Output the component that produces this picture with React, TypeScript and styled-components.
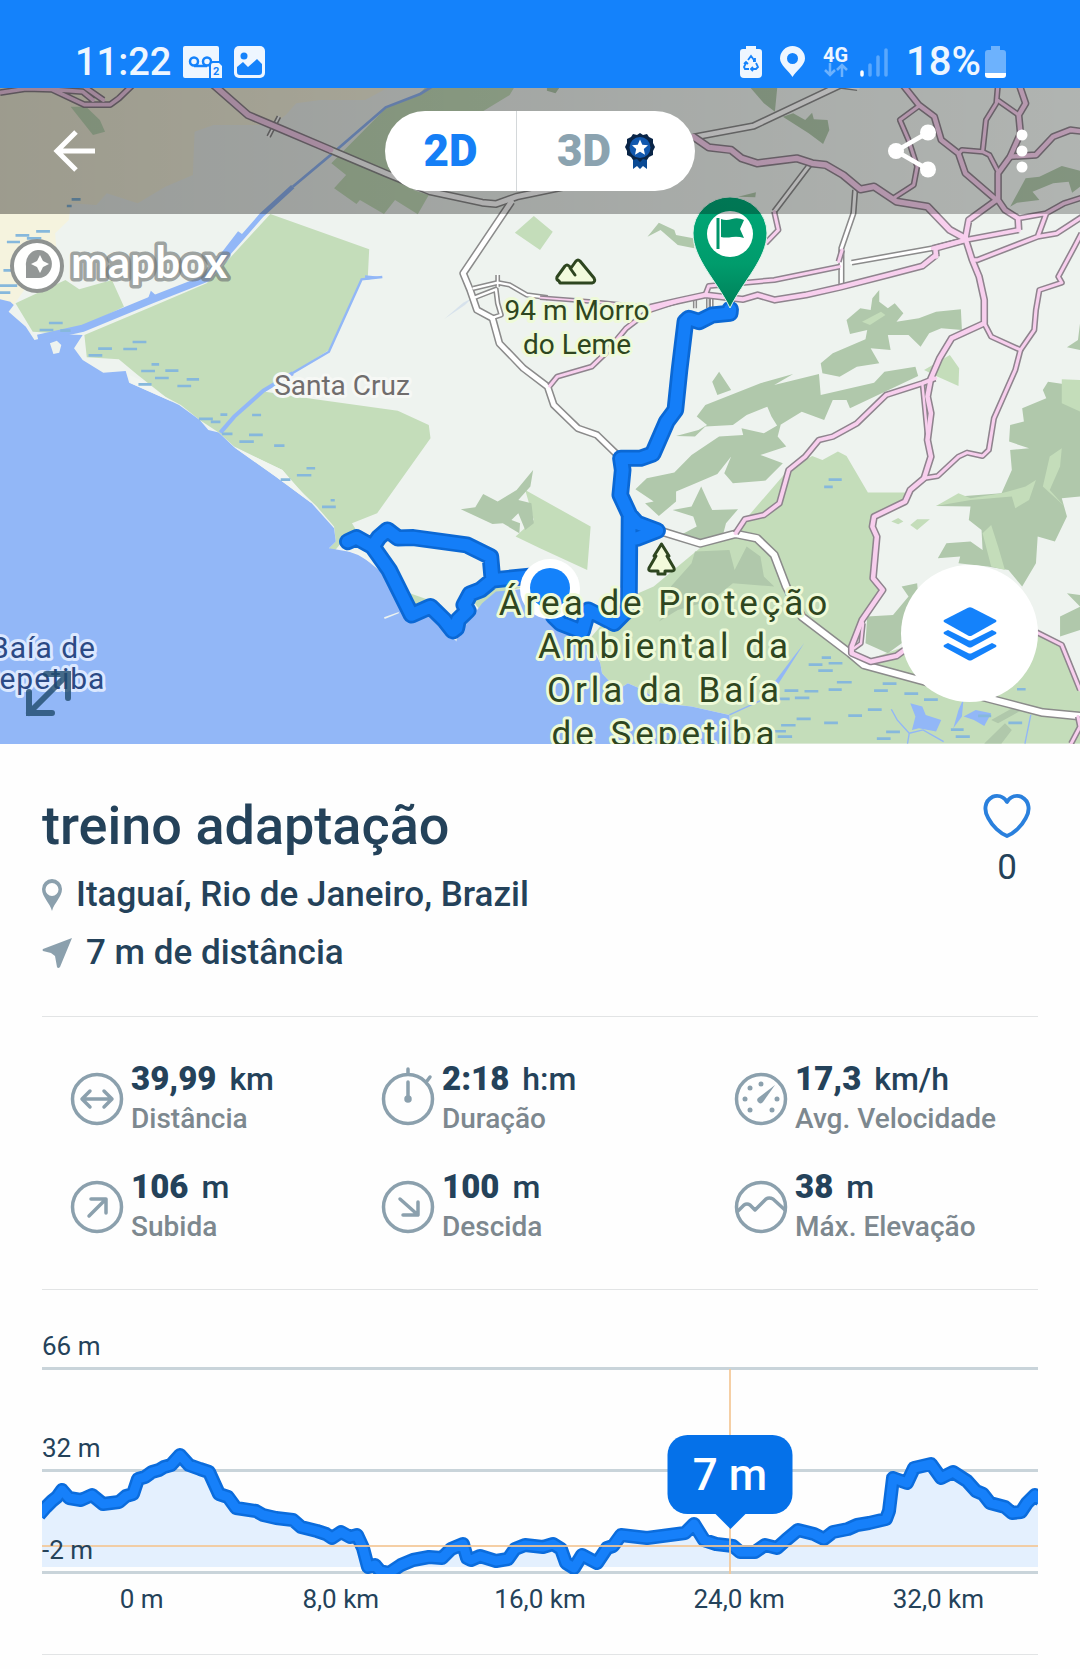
import React, { useState } from "react";
import styled, { createGlobalStyle } from "styled-components";

const ink = "#24425a";
const muted = "#7d888f";
const steel = "#8ba0ad";
const blue = "#1482fb";
const rule = "#e2e4e5";

const GlobalStyle = createGlobalStyle`
  * { box-sizing: border-box; }
  body {
    margin: 0;
    background: #fefefe;
    color: ${ink};
    font-family: Roboto, "Noto Sans", sans-serif;
  }
  button {
    border: 0;
    padding: 0;
    background: none;
    color: inherit;
    font: inherit;
    cursor: pointer;
  }
  svg { display: block; overflow: visible; }
  h1, p, dl, dd, dt { margin: 0; font-weight: inherit; }
`;

/* ---------- Status bar ---------- */

const StatusBar = styled.header`
  display: flex;
  align-items: flex-end;
  justify-content: space-between;
  height: 88px;
  padding: 0 74px 10px 75px;
  background: ${blue};
  color: #eef6ff;
`;

const StatusGroup = styled.div<{ $gap: number }>`
  display: flex;
  align-items: center;
  gap: ${(p) => p.$gap}px;
  height: 32px;
`;

const StatusText = styled.span<{ $size: number }>`
  font-size: ${(p) => p.$size}px;
  font-weight: 500;
  line-height: 32px;
`;

const BatteryGroup = styled.div`
  display: flex;
  align-items: center;
  gap: 4px;
`;

const Network = styled.div`
  display: flex;
  flex-direction: column;
  align-items: center;
  font-size: 20px;
  font-weight: 700;
  line-height: 16px;
`;

const NetworkGroup = styled.div`
  display: flex;
  align-items: center;
  gap: 12px;
`;

/* ---------- Map ---------- */

const MapArea = styled.section`
  position: relative;
  height: 656px;
  overflow: hidden;
  background: #eef3ef;
`;

const MapCanvas = styled.svg`
  width: 100%;
  height: 100%;
  overflow: hidden;
`;

const MapToolbar = styled.nav`
  position: absolute;
  inset: 0 0 auto 0;
  display: grid;
  grid-template-columns: 1fr auto 1fr;
  align-items: center;
  height: 126px;
  padding: 0 42px;
  background: linear-gradient(to right, rgba(0, 0, 0, 0.36), rgba(0, 0, 0, 0.26));
`;

const ToolbarActions = styled.div`
  display: flex;
  justify-content: flex-end;
  gap: 62px;
`;

const IconButton = styled.button`
  display: flex;
  align-items: center;
  justify-content: center;
  width: 64px;
  height: 64px;
  justify-self: start;
`;

const DotsButton = styled(IconButton)`
  width: 32px;
`;

const ViewSwitch = styled.div`
  display: flex;
  height: 80px;
  border-radius: 40px;
  overflow: hidden;
  background: #fff;
`;

const ViewOption = styled.button<{ $active: boolean; $wide?: boolean }>`
  display: flex;
  align-items: center;
  justify-content: center;
  gap: 14px;
  width: ${(p) => (p.$wide ? 179 : 131)}px;
  font-size: 44px;
  font-weight: 900;
  color: ${(p) => (p.$active ? "#157ff6" : "#8ba3b0")};

  & + & {
    border-left: 1px solid #d4d8da;
  }
`;

const ExpandButton = styled.button`
  position: absolute;
  left: 26px;
  bottom: 28px;
`;

const LayersButton = styled.button`
  position: absolute;
  right: 42px;
  bottom: 42px;
  display: flex;
  align-items: center;
  justify-content: center;
  width: 137px;
  height: 137px;
  border-radius: 50%;
  background: #fff;
`;

/* ---------- Details ---------- */

const Details = styled.main`
  padding: 0 42px;
`;

const Summary = styled.section`
  display: flex;
  justify-content: space-between;
  padding: 50px 0 42px;
  border-bottom: 1px solid ${rule};
`;

const Heading = styled.div`
  display: flex;
  flex-direction: column;
  gap: 16px;
`;

const Title = styled.h1`
  font-size: 54px;
  font-weight: 500;
  line-height: 64px;
`;

const Fact = styled.p`
  display: flex;
  align-items: center;
  gap: 14px;
  font-size: 35px;
  font-weight: 500;
  line-height: 42px;
`;

const LikeButton = styled.button`
  display: flex;
  flex-direction: column;
  align-items: center;
  align-self: flex-start;
  gap: 10px;
  width: 62px;
  font-size: 35px;
  line-height: 40px;
`;

const Stats = styled.dl`
  display: grid;
  grid-template-columns: 311fr 353fr 303fr;
  row-gap: 28px;
  padding: 42px 0 42px 29px;
  border-bottom: 1px solid ${rule};
`;

const Stat = styled.div`
  display: flex;
  align-items: center;
  gap: 8px;
  line-height: 40px;
  white-space: nowrap;
`;

const StatText = styled.div`
  display: flex;
  flex-direction: column-reverse;
`;

const StatLabel = styled.dt`
  font-size: 28px;
  font-weight: 500;
  color: ${muted};
`;

const StatValue = styled.dd`
  font-size: 32px;
  font-weight: 500;
`;

const StatNumber = styled.strong`
  margin-right: 13px;
  font-size: 33px;
  font-weight: 900;
`;

/* ---------- Elevation chart ---------- */

const ChartSection = styled.section`
  padding: 41px 0 40px;
  border-bottom: 1px solid ${rule};
  font-size: 26px;
  line-height: 30px;
`;

const Plot = styled.div`
  position: relative;
`;

const GridRow = styled.div<{ $first?: boolean }>`
  display: flex;
  align-items: flex-end;
  height: ${(p) => (p.$first ? "auto" : "102px")};
  padding-bottom: 6px;
  border-bottom: 3px solid #c9d4da;
`;

const GridLabel = styled.span`
  position: relative;
  z-index: 1;
`;

const Curve = styled.svg`
  position: absolute;
  left: 0;
  bottom: 0;
  width: 100%;
  height: 205px;
`;

const Axis = styled.div`
  display: grid;
  grid-template-columns: repeat(5, 1fr);
  padding-top: 10px;
  text-align: center;
`;

const Tooltip = styled.output`
  position: absolute;
  z-index: 2;
  top: 104px;
  transform: translateX(-50%);
  width: 125px;
  padding-top: 2px;
  border-radius: 20px;
  background: #0571e9;
  color: #fff;
  font-size: 44px;
  font-weight: 500;
  line-height: 77px;
  text-align: center;

  &::after {
    content: "";
    position: absolute;
    top: 100%;
    left: 50%;
    margin: -1px 0 0 -16px;
    border: 16px solid transparent;
    border-bottom: 0;
    border-top-color: #0571e9;
  }
`;

/* ---------- Map drawing ---------- */

const tile = (col: number, row: number) => `translate(${col * 1568} ${row * 1110})`;

type TileShapes = { col: number; row: number; d: string[] };

const sand: TileShapes[] = [
  { col: 0, row: 0, d: ["M0 250H1150L1060 300 930 300 860 310 830 345 790 375 620 375 565 395 560 525 480 560 400 610 310 580 280 615 205 610 200 660 160 700 165 760 90 840 30 930 0 930Z"] },
];

const parks: TileShapes[] = [
  {
    col: 0, row: 0, d: [
      "M205 320H250L290 360 305 395 270 405Z",
      "M785 642 1072 748 1068 830 1050 840 955 1050 850 1120 770 1175 910 1197 1155 1232 1245 1275 1250 1315 1095 1540 1022 1570 1040 1600 990 1630 970 1655 955 1645 975 1625 970 1580 920 1520 860 1460 820 1410 680 1340 635 1298 580 1260 525 1215 480 1190 400 1125 345 1078 252 1072 245 1005 440 920 600 850Z",
      "M45 910 190 840 230 868 325 840 360 920 240 980 170 1000 95 995Z",
      "M1245 250H1500L1480 285 1400 335 1250 450 1200 570 1245 585 1213 643 1147 600 1115 642 1045 600 1035 612 970 565 1005 525 962 490 1120 325 1220 280Z",
      "M1495 698 1550 648 1605 695 1568 750Z",
    ],
  },
  {
    col: 0, row: 1, d: [
      "M1525 360 1715 470 1705 600 1568 535 1497 500 1550 450Z",
      "M1190 670 1250 692 1310 750 1200 720Z",
      "M1370 690 1440 650 1530 650 1440 670 1390 715Z",
    ],
  },
  {
    col: 1, row: 1, d: [
      "M175 880 150 800 240 690 330 650 470 530 560 500 570 480 720 300 790 258 820 270 865 245 890 258 952 368H1075L1060 390 965 440 975 500 970 620 1000 660 940 740 905 850 950 870 1060 830 1450 790 1520 830 1568 960V1121H555L550 1035 440 1010 350 1000 300 960 255 940 225 960 180 910Z",
      "M1115 0 1190-45 1217-5 1215 48 1155 20Z",
    ],
  },
];

const forests: TileShapes[] = [
  {
    col: 1, row: 0, d: [
      "M20 250H65L45 280 20 272Z",
      "M600 250H690L682 335 650 310Z",
      "M705 350 735 340 770 360 790 338 795 358 835 360 840 390 822 432 780 400Z",
      "M575 590 627 577 625 592Z",
      "M312 710 345 668 390 690 395 705 445 715 448 745 400 735 350 690Z",
      "M1365 620 1410 535 1450 530 1515 498 1568 512V560L1545 578 1535 545 1490 550 1430 575 1450 600 1385 608Z",
      "M890 960 930 925 960 930 965 895 985 870 985 905 1010 925 1030 910 1055 940 1035 965 1100 955 1150 935 1222 928 1225 990 1165 985 1130 1000 1105 1040 1070 1005 1010 1005 1018 1050 960 1045 985 1090 920 1100 870 1130 820 1120 815 1090 850 1060 945 1018 950 990 900 1002Z",
      "M1568 970 1562 1020 1530 1042 1568 1050Z",
    ],
  },
  {
    col: 0, row: 1, d: [
      "M1338 418 1380 412 1403 372 1445 395 1500 360 1548 300 1540 350 1505 390 1543 400 1550 460 1525 480 1505 430 1485 450 1510 460 1508 490 1460 460 1430 462Z",
    ],
  },
  {
    col: 1, row: 1, d: [
      "M395 198 460 180 485 165 455 140 480 105 640 40 735 12 680 45 810 12 815 75 970 38 1000 5 1090-10 1098 18 900 115 890 90 850 90 825 150 760 125 690 170 672 140 660 110 600 135 560 165 480 170 450 200Z",
      "M500 35 520 5 555 60 515 75Z",
      "M277 358 310 325 390 308 440 255 520 200 590 195 585 175 650 190 700 160 690 200 715 230 640 255 705 280 655 332 560 340 535 310 555 260 515 312 440 345 395 365V395L345 438 305 400 330 395Z",
      "M385 420 440 410 468 350 490 400 500 420 575 418 540 460 530 500 460 530 400 500 455 470 445 440Z",
      "M345 755 400 690 380 650 440 580 450 545 550 540 565 600 600 530 640 560 650 620 680 650 560 640 500 690 400 720Z",
      "M1460 60 1475 35 1568 50V380L1515 385 1530 440 1495 515 1445 500 1440 580 1400 650 1360 600 1300 590 1215 580 1220 560 1155 565 1180 520 1250 515 1285 540 1282 480 1245 450 1250 410 1150 408 1215 380 1340 370 1370 300 1365 240 1420 235 1362 215 1365 165 1405 155 1400 115 1470 85Z",
      "M1050 650 1095 640 1100 700 1130 760 1010 850 945 820 950 740 1025 735 1070 680Z",
      "M1530 670 1568 675V780L1510 800 1510 740 1568 710Z",
      "M1310 1050 1380 1010 1400 1020 1330 1060ZM1290 1121 1350 1060 1370 1080 1340 1121Z",
    ],
  },
];

const clearings: TileShapes[] = [
  { col: 1, row: 0, d: ["M935 965 990 935 1003 945 958 975Z"] },
  {
    col: 1, row: 1, d: [
      "M1150 408 1215 370 1250 385 1340 370 1410 350 1440 330 1420 390 1380 415 1370 380 1250 390Z",
      "M1460 350 1480 260 1515 235 1510 290 1480 360 1522 408Z",
      "M1515 28 1568 30V125L1515 100Z",
      "M1020 455 1040 444 1055 455 1040 463ZM1075 465 1095 448 1132 448 1095 480Z",
      "M1285 490 1310 465 1330 530 1350 600 1310 590Z",
      "M820 290 865 250 885 310 820 305Z",
    ],
  },
];

const water: TileShapes[] = [
  {
    col: 0, row: 0, d: [
      "M0 898 30 905 40 915 25 935 75 980 100 1020 170 1003 240 1005 215 1045 240 1080 300 1118 365 1113 375 1148 500 1205 520 1215 580 1260 605 1290 635 1298 680 1342 800 1430 905 1510 970 1585 975 1625 955 1645 1040 1660 1100 1710 1195 1800 1320 1920 1400 1810 1440 1775 1540 1765 1608 1850 1698 1900 1743 1990 1748 2020 1793 2070 1823 2050 1868 2070 1918 2110 2008 2120 2118 2145 2123 2240H0Z",
    ],
  },
  {
    col: 1, row: 1, d: [
      "M767 820 690 945 678 940 740 855Z",
      "M1075 1000 1110 1010 1120 1035 1165 1050 1150 1085 1100 1075 1080 1080 1090 1040Z",
      "M1230 1040 1265 1020 1310 1030 1290 1068 1260 1050Z",
      "M1230 985 1225 1040 1200 1075 1215 1020Z",
    ],
  },
];

const streams: { d: string; w: number }[] = [
  { d: "M1270 250 1220 282 1120 322 960 465 850 560", w: 8 },
  { d: "M850 560 760 645 650 775", w: 14 },
  { d: "M700 700 600 835 440 900 240 985 110 1015", w: 22 },
  { d: "M1110 831 1050 838 955 1055 845 1122", w: 7 },
  { d: "M850 1120 765 1172 680 1250 640 1298", w: 12 },
  { d: "M2118 2145 2258 2078", w: 4 },
  { d: "M2993 2145 2976 2231", w: 4 },
  { d: "M2588 2128 2605 2160 2640 2200 2635 2231M2640 2200 2680 2190 2740 2225", w: 4 },
];

/* Marsh marks: x, y of the left end and length. */
const marsh: [number, number, number][] = [
  [105, 694, 40], [45, 706, 40], [78, 715, 42], [20, 726, 38], [10, 811, 30], [0, 857, 50], [0, 878, 30],
  [142, 969, 40], [115, 990, 40], [175, 992, 30], [385, 1026, 40], [285, 1046, 40], [358, 1047, 40],
  [257, 1066, 40], [410, 1113, 40], [440, 1093, 22], [480, 1112, 38], [208, 598, 26], [194, 618, 14],
  [450, 1134, 40], [542, 1138, 36], [402, 1153, 38], [515, 1158, 40], [578, 1257, 40], [612, 1266, 28],
  [640, 1244, 20], [732, 1245, 26], [645, 1302, 30], [723, 1305, 40], [695, 1325, 42], [796, 1337, 30],
  [890, 1405, 25], [862, 1426, 42], [815, 1439, 28], [935, 1521, 40], [960, 1501, 12],
  [2406, 1439, 38], [2393, 1461, 25], [2386, 1973, 27], [2406, 1990, 40], [2348, 1994, 40], [2376, 2012, 42],
  [2430, 2047, 43], [2278, 2072, 40], [2336, 2074, 40], [2406, 2069, 38], [2563, 2051, 40], [2626, 2081, 40],
  [2538, 2072, 40], [2683, 2099, 40], [2308, 2094, 42], [2253, 2097, 40], [2520, 2129, 40], [2463, 2147, 40],
  [2313, 2157, 41], [2393, 2169, 40], [2268, 2176, 42], [2242, 2194, 40], [2258, 2210, 42], [2573, 2196, 40],
  [2546, 2216, 40], [2928, 2169, 40], [2761, 2189, 37], [2775, 2210, 41], [2953, 2068, 25], [2840, 2148, 38],
];

const whiteRoads: { d: string; w: number }[] = [
  { d: "M960 450 1120 520 1250 575 1400 608 1440 612 1500 590 1640 560", w: 24 },
  { d: "M1485 605 1345 820 1365 870 1385 930 1430 955 1450 1030 1520 1105 1590 1160 1608 1215 1678 1285 1733 1305 1788 1360", w: 23 },
  { d: "M1375 865 1445 848 1480 855 1530 885 1590 893M1380 892 1440 868 1445 910 1455 945 1425 955", w: 16 },
  { d: "M1445 860V825M780 410 810 350", w: 14 },
  { d: "M2013 412 2188 378 2440 255 2490 262", w: 23 },
  { d: "M2353 492 2248 635M2483 570 2478 640 2443 745V865", w: 18 },
  { d: "M2473 788 2708 745", w: 18 },
  { d: "M2018 925V890M2056 925V895M2066 925V895", w: 12 },
  { d: "M1923 1595 2033 1630 2136 1602 2198 1615 2248 1665 2283 1760 2328 1850 2468 1960 2508 1995 2668 2040 2868 2095 3028 2138 3150 2150", w: 27 },
];

const pinkRoads: { d: string; w: number }[] = [
  { d: "M0 278 75 266 150 268 245 314H320L345 295 390 250M150 268 240 275 270 300M250 264 300 300", w: 20 },
  { d: "M615 250 720 345 800 380 960 450", w: 25 },
  { d: "M2013 410 2058 442 2123 450 2153 475 2198 490 2313 475 2358 490 2398 495 2448 525 2498 568 2538 560 2603 605 2693 620 2758 690 2803 715", w: 25 },
  { d: "M2248 635 2260 690 2223 730M2445 750 2435 785", w: 18 },
  { d: "M2618 250 2668 315 2713 350 2733 420 2783 460 2803 520 2893 600", w: 22 },
  { d: "M2668 318 2613 360 2638 420 2663 500 2653 555 2598 592", w: 18 },
  { d: "M2898 250 2893 310 2863 360 2853 455 2793 450 2783 462M2853 455 2873 465 2898 515M2896 300 2958 345", w: 18 },
  { d: "M2958 250 2978 310 2958 345 2963 400 2933 470 2898 520V600L2918 630 2956 655 2958 690", w: 22 },
  { d: "M2933 470 3008 465 3058 410 3108 390 3150 395", w: 22 },
  { d: "M2893 600 2813 660 2803 715 2823 780 2843 830 2858 900V970L2763 1015 2728 1075 2703 1135 2693 1190 2703 1240 2693 1320 2703 1370 2683 1435 2643 1470 2628 1505 2538 1550 2533 1580 2546 1610 2535 1735 2563 1770 2503 1860 2473 1940V1960L2528 1985 2603 1968 2640 1940", w: 22 },
  { d: "M2506 1870 2500 1930 2480 1945M2678 1150 2693 1310", w: 16 },
  { d: "M2715 1135 2678 1150 2573 1185 2488 1270 2418 1310 2378 1320 2338 1370 2290 1410 2263 1510 2218 1545 2163 1558 2136 1600", w: 20 },
  { d: "M2858 970 2878 1010 2963 1050 2948 1110 2886 1255 2871 1350 2853 1368 2808 1358 2783 1370 2723 1428 2683 1435", w: 18 },
  { d: "M2963 1050 3003 990 3008 930 3018 870 3083 848 3073 830 3120 740 3140 700", w: 18 },
  { d: "M1568 893 1720 905 1888 922", w: 14 },
  { d: "M1888 922 1968 903 2048 885 2158 898 2200 885 2250 900 2340 885 2438 862 2578 825 2678 798 2718 765M2718 770 2716 745 2803 720", w: 22 },
  { d: "M2048 885 2058 858 2248 840 2438 800", w: 18 },
  { d: "M2708 745 2803 720 2958 690", w: 20 },
  { d: "M2956 655 3038 640 3090 610 3150 590M3038 640 3013 710 2838 780 2823 780M3013 710 3068 700 3150 645", w: 19 },
  { d: "M1968 903 1888 930 1818 985 1758 1060 1718 1100 1618 1130 1596 1158", w: 18 },
  { d: "M3010 1897 3083 1935 3136 2070M3130 2150 3136 2180 3110 2231", w: 18 },
];

const trail =
  "M2120 928 2119 940 2068 945 2030 965 2000 955 1990 965 1973 1110 1961 1230 1936 1265 1895 1362 1860 1375 1803 1375 1808 1410 1801 1485 1828 1545 1826 1825 1783 1870 1708 1830 1690 1895 1628 1870 1608 1850M1828 1545 1850 1570 1908 1592 1850 1615 1828 1620" +
  "M1600 1725 1545 1728 1430 1740 1424 1670 1355 1635 1200 1613 1155 1614 1125 1590 1100 1612 1082 1640 1035 1613 1010 1625M1082 1640 1130 1710 1195 1845 1250 1820 1290 1860 1315 1893 1325 1885 1330 1860 1358 1832 1348 1815 1365 1782 1395 1770 1430 1740";

const Shapes = ({ list, fill }: { list: TileShapes[]; fill: string }) => (
  <>
    {list.map((t, i) => (
      <g key={i} transform={tile(t.col, t.row)}>
        <path d={t.d.join("")} fill={fill} />
      </g>
    ))}
  </>
);

const Roads = ({ list, edge, fill }: { list: { d: string; w: number }[]; edge: string; fill: string }) => (
  <g fill="none" strokeLinejoin="round">
    {list.map((r, i) => <path key={i} d={r.d} stroke={edge} strokeWidth={r.w} />)}
    {list.map((r, i) => <path key={i} d={r.d} stroke={fill} strokeWidth={r.w - 9} strokeLinecap="round" />)}
  </g>
);

const MapLabel = styled.text<{ $size: number; $color: string; $halo: string; $tracking?: number }>`
  font-size: ${(p) => p.$size}px;
  fill: ${(p) => p.$color};
  stroke: ${(p) => p.$halo};
  stroke-width: 6px;
  stroke-linejoin: round;
  paint-order: stroke;
  letter-spacing: ${(p) => p.$tracking ?? 0}px;
  text-anchor: middle;
`;

const Wordmark = styled.text`
  font-family: Lato, Roboto, sans-serif;
  font-size: 44px;
  font-weight: 700;
  fill: #fff;
  stroke: rgba(110, 115, 115, 0.65);
  stroke-width: 7px;
  stroke-linejoin: round;
  paint-order: stroke;
`;

const green = { $color: "#2e4620", $halo: "#eefad8" };

const TrailMap = () => (
  <MapCanvas viewBox="0 88 1080 656" preserveAspectRatio="xMidYMid slice" role="img" aria-label="Mapa da trilha">
    <defs>
      <linearGradient id="pin" x1="0" y1="0" x2="0" y2="1">
        <stop offset="0" stopColor="#00a877" />
        <stop offset="0.6" stopColor="#009c6c" />
        <stop offset="1" stopColor="#00805a" />
      </linearGradient>
    </defs>
    <g transform="scale(0.3444 0.3333)">
      <rect width="3136" height="2240" fill="#eef3ef" />
      <Shapes list={sand} fill="#f5f3de" />
      <Shapes list={parks} fill="#c4ddba" />
      <Shapes list={forests} fill="#b0c8ab" />
      <Shapes list={clearings} fill="#c4ddba" />
      <Shapes list={water} fill="#92b7f7" />
      <path d="M145 1030 165 1022 178 1035 172 1058 155 1062ZM1115 1852 1158 1836 1158 1840 1117 1857ZM1318 1915H1327L1325 1925Z" fill="#eef3ef" />
      <path d="M680 1342 820 1410 905 1510 800 1430ZM375 1125 410 1140 500 1205 380 1150ZM1000 1650 1050 1660 1080 1690 1040 1665Z" fill="#f1f5f1" />
      <g fill="none" stroke="#92b7f7">
        {streams.map((s, i) => <path key={i} d={s.d} strokeWidth={s.w} />)}
      </g>
      <path d="M430 895 438 872 455 888ZM1060 826 1112 831 1060 840Z" fill="#92b7f7" />
      <path d="M1290 957 1345 908 1370 895 1350 915Z" fill="#d7e2ec" />
      <path d={marsh.map(([x, y, l]) => `M${x} ${y}h${l}`).join("")} stroke="#86b8dc" strokeWidth="8" />
      <Roads list={whiteRoads} edge="#8b8b8b" fill="#fff" />
      <Roads list={pinkRoads} edge="#8f848e" fill="#f8cfee" />
      <g fill="none" strokeLinecap="round" strokeLinejoin="round">
        <path d={trail} stroke="#0b68d4" strokeWidth="51" />
        <path d={trail} stroke="#147ef8" strokeWidth="35" />
      </g>
    </g>

    <circle cx="550" cy="589" r="30" fill="#fff" />
    <circle cx="550" cy="588" r="20" fill={blue} />

    <path d="M730 308C717 281 693 259 693 233a37 36 0 0 1 74 0C767 259 743 281 730 308Z" fill="url(#pin)" stroke="#dff3ea" strokeWidth="1" strokeLinejoin="round" />
    <circle cx="730" cy="234" r="23" fill="#fff" />
    <path d="M716.500 218h3v31h-3ZM721 219q5 2 11 0t12 1l-4 9 4 9q-6-2-12-1t-11 0Z" fill="#00966a" />

    <path d="M559 281q-3-1-2-4l8-11q2-2 4 0l2 2 5-7q2-2 4 0l14 17q2 4-2 5h-32ZM570 268l5 7" fill="#f2fbdc" stroke="#2e4620" strokeWidth="3" strokeLinejoin="round" strokeLinecap="round" />
    <path d="M661.500 544 669 556h-2l7 12q1 3-2 3h-7v3h-7v-3h-7q-3 0-2-3l7-12h-2Z" fill="#f2fbdc" stroke="#2e4620" strokeWidth="3" strokeLinejoin="round" />

    <MapLabel x="577" y="320" $size={28} {...green}>94 m Morro</MapLabel>
    <MapLabel x="577" y="354" $size={28} {...green}>do Leme</MapLabel>
    <MapLabel x="342" y="395" $size={28} $color="#706d6d" $halo="#f6f8f5">Santa Cruz</MapLabel>
    <MapLabel x="43" y="658" $size={30} $color="#2b4a85" $halo="#dbe8ff" $tracking={1}>Baía de</MapLabel>
    <MapLabel x="43" y="689" $size={30} $color="#2b4a85" $halo="#dbe8ff" $tracking={1}>Sepetiba</MapLabel>
    <MapLabel x="665" y="615" $size={35} $tracking={4} {...green}>Área de Proteção</MapLabel>
    <MapLabel x="665" y="658" $size={35} $tracking={4} {...green}>Ambiental da</MapLabel>
    <MapLabel x="665" y="702" $size={35} $tracking={4} {...green}>Orla da Baía</MapLabel>
    <MapLabel x="665" y="746" $size={35} $tracking={4} {...green}>de Sepetiba</MapLabel>

    <circle cx="37" cy="266" r="25" fill="#fff" fillOpacity="0.95" stroke="#8f9391" strokeWidth="4" />
    <path d="M26 278V266a13 14 0 1 1 13 12ZM40 255l-3 6-6 3 6 3 3 6 3-6 6-3-6-3Z" fill="#939796" fillRule="evenodd" />
    <Wordmark x="71" y="278">mapbox</Wordmark>
  </MapCanvas>
);

/* ---------- Stat icons ---------- */

const statIcons: Record<string, React.ReactNode> = {
  distance: <path d="M12 26h28M19 18l-8 8 8 8M33 18l8 8-8 8" />,
  time: (
    <>
      <path d="M26 9v17M26-4v4M45 8l3-4" />
      <circle cx="26" cy="26" r="2" fill={steel} />
    </>
  ),
  speed: (
    <>
      <path d="M40 12 28 29a3 3 0 0 1-5-4Z" fill={steel} stroke="none" />
      <g fill={steel} stroke="none">
        <circle cx="26" cy="11" r="2.500" /><circle cx="15" cy="15" r="2.500" /><circle cx="10" cy="26" r="2.500" />
        <circle cx="15" cy="37" r="2.500" /><circle cx="37" cy="37" r="2.500" /><circle cx="42" cy="26" r="2.500" />
      </g>
    </>
  ),
  up: <path d="M18 35 35 18M20 18h15v14" />,
  down: <path d="M18 18 36 34M21 34h15V21" />,
  peak: <path d="M3 30l6-6q3-2 6 0l5 5 11-11q3-2 7 0l12 11" />,
};

const StatIcon = ({ kind }: { kind: string }) => (
  <svg width="52" height="52" viewBox="0 0 52 52" fill="none" stroke={steel} strokeWidth="3.500" strokeLinecap="round" strokeLinejoin="round" aria-hidden="true">
    <circle cx="26" cy="26" r="24.500" />
    {statIcons[kind]}
  </svg>
);

const stats = [
  { kind: "distance", value: "39,99", unit: "km", label: "Distância" },
  { kind: "time", value: "2:18", unit: "h:m", label: "Duração" },
  { kind: "speed", value: "17,3", unit: "km/h", label: "Avg. Velocidade" },
  { kind: "up", value: "106", unit: "m", label: "Subida" },
  { kind: "down", value: "100", unit: "m", label: "Descida" },
  { kind: "peak", value: "38", unit: "m", label: "Máx. Elevação" },
];

/* Elevation samples as [distance, depth below the 66 m line]. */
const profile: [number, number][] = [
  [-3, 146], [4, 138], [10, 132], [15, 128], [20, 121], [27, 129], [39, 131], [50, 126], [61, 135], [77, 133], [84, 127],
  [91, 125], [96, 110], [103, 108], [110, 103], [117, 101], [122, 98], [129, 96], [138, 86], [147, 96], [158, 100],
  [167, 103], [177, 125], [186, 128], [194, 139], [214, 142], [221, 146], [234, 149], [251, 151], [259, 158],
  [275, 162], [284, 165], [290, 169], [299, 163], [308, 168], [315, 166], [321, 179], [326, 198], [333, 196],
  [338, 202], [347, 204], [359, 196], [371, 191], [387, 188], [400, 189], [409, 180], [421, 175], [425, 189],
  [429, 191], [438, 187], [454, 192], [466, 190], [473, 180], [483, 176], [501, 178], [511, 175], [519, 180],
  [524, 194], [532, 199], [540, 186], [555, 194], [565, 179], [571, 177], [579, 166], [605, 169], [643, 164],
  [652, 155], [662, 171], [674, 175], [691, 177], [698, 183], [713, 183], [723, 176], [735, 179], [744, 171],
  [756, 161], [772, 165], [782, 170], [791, 163], [806, 160], [815, 156], [827, 154], [844, 150], [847, 142],
  [851, 109], [865, 114], [872, 99], [889, 95], [899, 109], [911, 103], [925, 112], [934, 122], [941, 125],
  [948, 134], [963, 138], [970, 144], [979, 143], [985, 134], [993, 126], [999, 131],
];

const curve = `M${profile.map(([x, y]) => `${x} ${y}`).join("L")}`;

const cursor = 688;
const chartWidth = 996;

export default function App() {
  const [view, setView] = useState("2D");
  const [likes, setLikes] = useState(0);

  return (
    <>
      <GlobalStyle />
      <StatusBar>
        <StatusGroup $gap={12}>
          <StatusText $size={38}>11:22</StatusText>
          <svg width="39" height="32" viewBox="0 0 39 32" aria-hidden="true">
            <path d="M2 0H34q2 0 2 2V15H30q-4 0-4 4V32H2q-2 0-2-2V2Q0 0 2 0Z" fill="#eef6ff" />
            <g fill="none" stroke={blue} strokeWidth="2.500">
              <circle cx="11" cy="15.500" r="4" /><circle cx="24" cy="15.500" r="4" /><path d="M11 20H24" />
            </g>
            <path d="M30 17h6l3 3v12H28V19q0-2 2-2Z" fill="#eef6ff" />
            <text x="30" y="29" fontSize="11" fontWeight="700" fill={blue}>2</text>
          </svg>
          <svg width="31" height="32" viewBox="0 0 31 32" aria-hidden="true">
            <rect width="31" height="32" rx="5" fill="#eef6ff" />
            <circle cx="10" cy="10" r="3.500" fill={blue} />
            <path d="M3 21l6-5 5 5 9-8 5 5v8q0 3-3 3H6q-3 0-3-3Z" fill={blue} />
          </svg>
        </StatusGroup>
        <StatusGroup $gap={18}>
          <svg width="22" height="32" viewBox="0 0 22 32" aria-hidden="true">
            <path d="M6 0h10v3h3q3 0 3 3v22q0 4-4 4H4q-4 0-4-4V6q0-3 3-3h3Z" fill="#eef6ff" />
            <path d="M8 14l3-4 3 4M16 17l2 4-2 2h-4M9 23H5l-1-2 2-4M13 15h2v-3M13 21l-2 2 2 2M4 18l2-2 2 2" fill="none" stroke={blue} strokeWidth="1.800" />
          </svg>
          <svg width="25" height="32" viewBox="0 0 25 32" aria-hidden="true">
            <path d="M12.500 31C9 25 0 19 0 12.500a12.500 12.500 0 0 1 25 0C25 19 16 25 12.500 31ZM12.500 7a5.500 5.500 0 1 0 0 11 5.500 5.500 0 0 0 0-11Z" fill="#eef6ff" fillRule="evenodd" />
          </svg>
          <NetworkGroup>
            <Network>
              4G
              <svg width="22" height="14" viewBox="0 0 22 14" fill="none" stroke="#6db2fd" strokeWidth="2.500" aria-hidden="true">
                <path d="M5 0v12M0 7l5 5 5-5M17 14V2M12 7l5-5 5 5" />
              </svg>
            </Network>
            <svg width="28" height="30" viewBox="0 0 28 30" strokeWidth="3.500" strokeLinecap="round" aria-hidden="true">
              <path d="M2 25v3" stroke="#fff" />
              <path d="M10 18v10M18 10v18M26 3v25" stroke="#5aa8fd" />
            </svg>
          </NetworkGroup>
          <BatteryGroup>
            <StatusText $size={40}>18%</StatusText>
            <svg width="21" height="32" viewBox="0 0 21 32" aria-hidden="true">
              <path d="M6 0h9v4h3q3 0 3 3v20H0V7q0-3 3-3h3Z" fill="#6db2fd" />
              <path d="M0 27h21v2q0 3-3 3H3q-3 0-3-3Z" fill="#fff" />
            </svg>
          </BatteryGroup>
        </StatusGroup>
      </StatusBar>

      <MapArea>
        <TrailMap />
        <MapToolbar>
          <IconButton aria-label="Voltar">
            <svg width="42" height="42" viewBox="0 0 42 42" fill="none" stroke="#fff" strokeWidth="5" aria-hidden="true">
              <path d="M42 21H4M23 2 4 21l19 19" />
            </svg>
          </IconButton>
          <ViewSwitch>
            <ViewOption $active={view === "2D"} aria-pressed={view === "2D"} onClick={() => setView("2D")}>2D</ViewOption>
            <ViewOption $wide $active={view === "3D"} aria-pressed={view === "3D"} onClick={() => setView("3D")}>
              3D
              <svg width="30" height="36" viewBox="0 0 30 36" aria-hidden="true">
                <path d="M8 24h14v12l-4-3-3 3-3-3-4 3Z" fill="#0a4a94" />
                <path d="M15 0l3 2 4-1 2 3 4 2v4l2 4-2 4v4l-4 2-2 3-4-1-3 3-3-3-4 1-2-3-4-2v-4l-2-4 2-4V6l4-2 2-3 4 1Z" fill="#0a2547" />
                <circle cx="15" cy="14.500" r="10.500" fill="#1258ae" />
                <path d="M15 6.500l2.300 5.200 5.700.6-4.200 3.800 1.200 5.600-5-2.900-5 2.900 1.200-5.600L7 12.300l5.700-.6Z" fill="#fff" />
              </svg>
            </ViewOption>
          </ViewSwitch>
          <ToolbarActions>
            <IconButton aria-label="Compartilhar">
              <svg width="48" height="54" viewBox="0 0 48 54" fill="#fff" aria-hidden="true">
                <path d="M40 8.500 8 27l32 18.500" fill="none" stroke="#fff" strokeWidth="4.500" />
                <circle cx="8" cy="27" r="8" /><circle cx="40" cy="8.500" r="8" /><circle cx="40" cy="45.500" r="8" />
              </svg>
            </IconButton>
            <DotsButton aria-label="Mais opções">
              <svg width="12" height="44" viewBox="0 0 12 44" fill="#fff" aria-hidden="true">
                <circle cx="6" cy="6" r="5.500" /><circle cx="6" cy="22" r="5.500" /><circle cx="6" cy="38" r="5.500" />
              </svg>
            </DotsButton>
          </ToolbarActions>
        </MapToolbar>
        <ExpandButton aria-label="Expandir mapa">
          <svg width="45" height="45" viewBox="0 0 45 45" fill="none" stroke="#1f4a6b" strokeOpacity="0.8" strokeWidth="6" strokeLinecap="round" aria-hidden="true">
            <path d="M20 3H42V27M42 3 3 42M3 21V42H26" />
          </svg>
        </ExpandButton>
        <LayersButton aria-label="Camadas">
          <svg width="54" height="54" viewBox="0 0 54 54" fill={blue} aria-hidden="true">
            <path d="M25 0.800q2-1 4 0L53 13q1 1 0 2L29 28.500q-2 1-4 0L1 15q-1-1 0-2Z" />
            <path d="M1 25l4-2 20 10q2 1 4 0l20-10 4 2q1 1 0 2L29 40q-2 1-4 0L1 27q-1-1 0-2Z" />
            <path d="M1 38l4-2 20 10q2 1 4 0l20-10 4 2q1 1 0 2L29 53q-2 1-4 0L1 40q-1-1 0-2Z" />
          </svg>
        </LayersButton>
      </MapArea>

      <Details>
        <Summary>
          <Heading>
            <Title>treino adaptação</Title>
            <Fact>
              <svg width="20" height="32" viewBox="0 0 20 32" aria-hidden="true">
                <path d="M10 32C8 24 0 18 0 10a10 10 0 0 1 20 0C20 18 12 24 10 32ZM10 4a6 6 0 1 0 0 13 6 6 0 0 0 0-13Z" fill={steel} fillRule="evenodd" />
              </svg>
              Itaguaí, Rio de Janeiro, Brazil
            </Fact>
            <Fact>
              <svg width="30" height="30" viewBox="0 0 30 30" aria-hidden="true">
                <path d="M30 0 18 29q-2 2-3 0L13 18 9 15 1 13q-1-1 0-2Z" fill={steel} />
              </svg>
              7 m de distância
            </Fact>
          </Heading>
          <LikeButton aria-label="Curtir" onClick={() => setLikes(likes ? 0 : 1)}>
            <svg width="48" height="44" viewBox="0 0 48 45" fill="none" stroke="#2a80dd" strokeWidth="4" strokeLinejoin="round" aria-hidden="true">
              <path d="M24 8C20 2 14 1 9 3 1 7 0 17 5 25c4 8 12 15 19 18 7-3 15-10 19-18 5-8 4-18-4-22-5-2-11-1-15 5Z" />
            </svg>
            {likes}
          </LikeButton>
        </Summary>

        <Stats>
          {stats.map((s) => (
            <Stat key={s.label}>
              <StatIcon kind={s.kind} />
              <StatText>
                <StatLabel>{s.label}</StatLabel>
                <StatValue><StatNumber>{s.value}</StatNumber>{s.unit}</StatValue>
              </StatText>
            </Stat>
          ))}
        </Stats>

        <ChartSection aria-label="Perfil de elevação">
          <Plot>
            <GridRow $first><GridLabel>66 m</GridLabel></GridRow>
            <GridRow><GridLabel>32 m</GridLabel></GridRow>
            <GridRow><GridLabel>-2 m</GridLabel></GridRow>
            <Curve viewBox="0 0 996 205" preserveAspectRatio="none" aria-hidden="true">
              <clipPath id="plot"><rect width="996" height="205" /></clipPath>
              <clipPath id="fillArea"><rect width="996" height="198" /></clipPath>
              <path d={`${curve}V198H-3Z`} fill="#1482fb" fillOpacity="0.110" clipPath="url(#fillArea)" />
              <g clipPath="url(#plot)" fill="none" strokeLinejoin="round">
                <path d={curve} stroke="#0b6cdc" strokeWidth="14" />
                <path d={curve} stroke="#1680fa" strokeWidth="9" />
              </g>
              <path d={`M0 177H996M${cursor} 0V205`} stroke="#f3c795" strokeOpacity="0.850" strokeWidth="2" />
            </Curve>
            <Tooltip style={{ left: `${(cursor / chartWidth) * 100}%` }}>7 m</Tooltip>
          </Plot>
          <Axis>
            <span>0 m</span>
            <span>8,0 km</span>
            <span>16,0 km</span>
            <span>24,0 km</span>
            <span>32,0 km</span>
          </Axis>
        </ChartSection>
      </Details>
    </>
  );
}
